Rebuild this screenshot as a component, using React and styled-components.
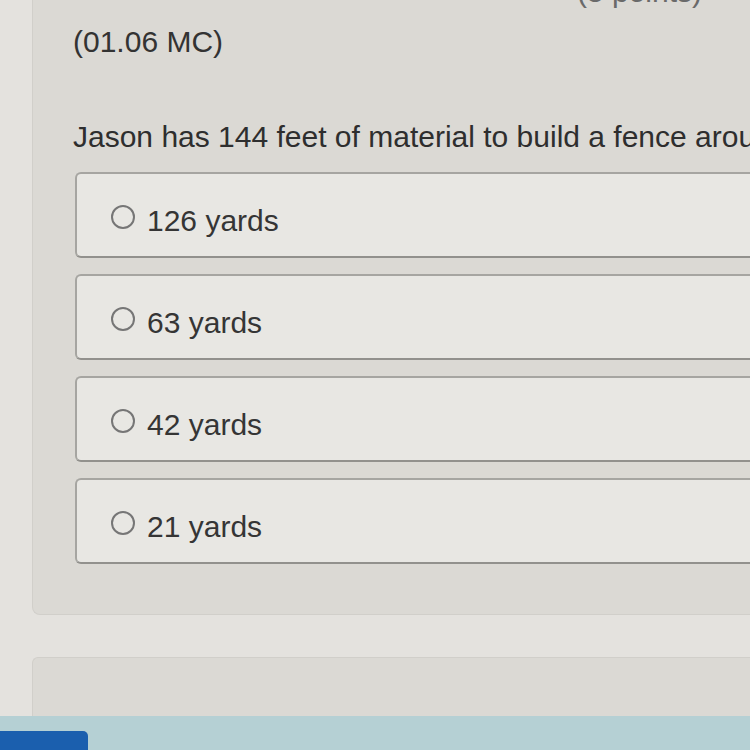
import React from 'react';
import styled, { createGlobalStyle } from 'styled-components';

const GlobalStyle = createGlobalStyle`
  body {
    margin: 0;
    background: #e4e2de;
    font-family: "Liberation Sans", Arial, sans-serif;
    overflow: hidden;
  }
`

const Page = styled.div`
  width: 750px;
  height: 750px;
  overflow: hidden;
  display: flex;
  flex-direction: column;
`

const Main = styled.div`
  flex: 1;
  padding-left: 32px;
  display: flex;
  flex-direction: column;
`

const QuestionPanel = styled.div`
  background: #dbd9d4;
  border: 1px solid #d1cfca;
  border-top: none;
  border-right: none;
  border-radius: 0 0 0 8px;
  padding: 0 0 50px 42px;
  display: flex;
  flex-direction: column;
`

const Header = styled.div`
  height: 10px;
  display: flex;
  justify-content: flex-end;
  align-items: flex-end;
  padding-right: 48px;
  overflow: hidden;
`

const Points = styled.span`
  font-size: 30px;
  line-height: 36px;
  color: #6a6a6a;
`

const Code = styled.div`
  margin: 14px 0 0 -2px;
  font-size: 30px;
  line-height: 36px;
  color: #333;
`

const Prompt = styled.div`
  margin: 59px 0 0 -2px;
  font-size: 30px;
  line-height: 36px;
  color: #2e2e2e;
  white-space: nowrap;
`

const Choices = styled.div`
  margin-top: 17px;
  display: flex;
  flex-direction: column;
  gap: 16px;
`

const Choice = styled.label`
  height: 86px;
  box-sizing: border-box;
  background: #e8e7e3;
  border: 2px solid #a6a5a1;
  border-bottom-color: #92918d;
  border-right: none;
  border-radius: 6px 0 0 6px;
  padding: 12px 0 0 34px;
  display: flex;
  align-items: center;
  gap: 12px;
`

const Radio = styled.span`
  width: 24px;
  height: 24px;
  box-sizing: border-box;
  border: 2px solid #767676;
  border-radius: 50%;
  margin-bottom: 8px;
  flex-shrink: 0;
`

const ChoiceText = styled.span`
  font-size: 30px;
  line-height: 36px;
  color: #353535;
`

const NextPanel = styled.div`
  margin-top: 42px;
  height: 58px;
  background: #dbd9d4;
  border: 1px solid #d1cfca;
  border-right: none;
  border-bottom: none;
  border-radius: 6px 0 0 0;
`

const Footer = styled.div`
  height: 34px;
  flex-shrink: 0;
  background: #b5d0d4;
  padding-top: 15px;
  box-sizing: border-box;
`

const NavButton = styled.div`
  width: 88px;
  height: 40px;
  background: #1b5fae;
  border-radius: 0 5px 0 0;
  color: #fff;
  font-size: 22px;
  padding: 14px 0 0 26px;
  box-sizing: border-box;
`

const choices = ['126 yards', '63 yards', '42 yards', '21 yards']

export default function App() {
  return (
    <Page>
      <GlobalStyle />
      <Main>
        <QuestionPanel>
          <Header>
            <Points>(5 points)</Points>
          </Header>
          <Code>(01.06 MC)</Code>
          <Prompt>Jason has 144 feet of material to build a fence around his garden.</Prompt>
          <Choices>
            {choices.map(c => (
              <Choice key={c}>
                <Radio />
                <ChoiceText>{c}</ChoiceText>
              </Choice>
            ))}
          </Choices>
        </QuestionPanel>
        <NextPanel />
      </Main>
      <Footer>
        <NavButton>Prev</NavButton>
      </Footer>
    </Page>
  );
}
